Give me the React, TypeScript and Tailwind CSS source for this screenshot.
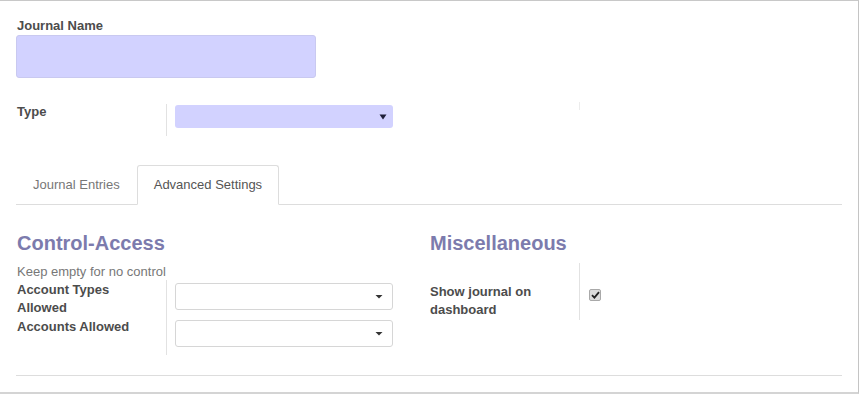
import React from 'react';

function Caret({ dark }: { dark?: boolean }) {
  return (
    <svg width="8" height="6" viewBox="0 0 8 6" className="shrink-0">
      <path d={dark ? 'M0.5 0.5 L7.5 0.5 L4 5.5 Z' : 'M0.5 1 L7.5 1 L4 4.5 Z'} fill={dark ? '#1f1f3a' : '#333'} />
    </svg>
  );
}

function FieldRow({
  label,
  height,
  labelPad,
  children,
}: {
  label: React.ReactNode;
  height: string;
  labelPad?: string;
  children: React.ReactNode;
}) {
  return (
    <div className={`flex ${height}`}>
      <div className={`w-[150px] pl-px font-bold text-[#4c4c4c] leading-[18px] ${labelPad ?? 'pt-px'}`}>{label}</div>
      <div className="flex-1 border-l border-[#e2e2e2] pl-2">{children}</div>
    </div>
  );
}

function EmptySelect() {
  return (
    <div className="mt-[3px] flex h-[27px] w-[218px] items-center justify-end rounded-[3px] border border-[#d6d6d6] bg-white pr-[9px]">
      <Caret />
    </div>
  );
}

export default function App() {
  return (
    <div className="h-[394px] w-[859px] bg-white font-['Liberation_Sans',Arial,sans-serif] text-[13px] text-[#4c4c4c]">
      <div className="h-[394px] w-[859px] border-t border-r border-b-2 border-t-[#c8c8c8] border-r-[#c4c4c4] border-b-[#d4d4d4] px-4 pt-[15px]">
        {/* Journal name */}
        <div className="h-[19px] pl-px pt-px font-bold leading-[18px]">Journal Name</div>
        <div className="h-[43px] w-[300px] rounded-[3px] border border-[#c9c9f0] bg-[#d2d2ff]" />

        {/* Type */}
        <div className="mt-[26px] flex">
          <div className="flex h-[32px] w-[413px]">
            <div className="-mt-px w-[150px] pl-px font-bold leading-[18px]">Type</div>
            <div className="flex-1 border-l border-[#e2e2e2] pl-2">
              <div className="mt-px flex h-[23px] w-[218px] items-center justify-end rounded-[3px] bg-[#d2d2ff] pr-[6px]">
                <Caret dark />
              </div>
            </div>
          </div>
          <div className="ml-[150px] mt-[-2px] h-[8px] border-l border-[#ececec]" />
        </div>

        {/* Tabs */}
        <div className="mt-[29px] flex h-[40px] border-b border-[#dddddd]">
          <div className="border border-transparent px-4 py-[10px] leading-[18px] text-[#777]">Journal Entries</div>
          <div className="-mb-px rounded-t-[3px] border border-[#dddddd] border-b-white bg-white px-4 py-[10px] leading-[18px] text-[#555]">
            Advanced Settings
          </div>
        </div>

        {/* Groups */}
        <div className="mt-[27px] grid grid-cols-2">
          <div>
            <h2 className="pl-px text-[20px] font-bold leading-[22px] text-[#7c7bad]">Control-Access</h2>
            <div className="mt-[8px] h-[18px] pl-px pt-px leading-[18px] text-[#777]">Keep empty for no control</div>
            <FieldRow
              height="h-[37px]"
              label={
                <>
                  Account Types
                  <br />
                  Allowed
                </>
              }
            >
              <EmptySelect />
            </FieldRow>
            <FieldRow height="h-[38px]" label="Accounts Allowed">
              <EmptySelect />
            </FieldRow>
          </div>
          <div>
            <h2 className="pl-px text-[20px] font-bold leading-[22px] text-[#7c7bad]">Miscellaneous</h2>
            <div className="mt-[9px]">
              <FieldRow
                height="h-[57px]"
                labelPad="pt-[20px]"
                label={
                  <>
                    Show journal on
                    <br />
                    dashboard
                  </>
                }
              >
                <div className="ml-px mt-[26px] flex h-[12px] w-[12px] items-center justify-center rounded-[2px] border border-[#a9a9a9] bg-[#dcdcdc]">
                  <svg width="9" height="8" viewBox="0 0 9 8">
                    <path d="M1 4.2 L3.4 6.6 L8 1.2" stroke="#222" strokeWidth="1.8" fill="none" />
                  </svg>
                </div>
              </FieldRow>
            </div>
          </div>
        </div>

        {/* Footer rule */}
        <div className="mt-[20px] border-b border-[#dddddd]" />
      </div>
    </div>
  );
}
